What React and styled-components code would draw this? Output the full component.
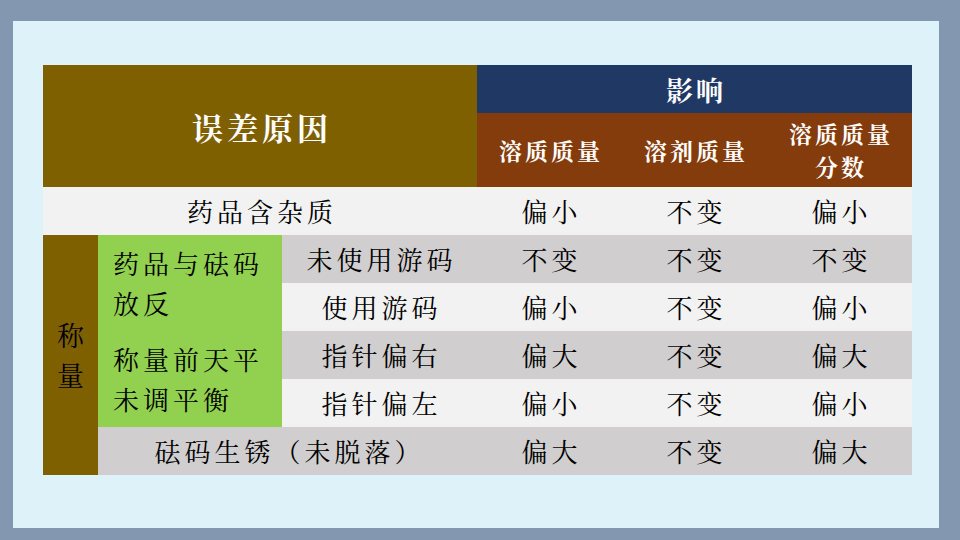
import styled, { createGlobalStyle } from "styled-components";

const GlobalStyle = createGlobalStyle`
  html, body {
    margin: 0;
    padding: 0;
    background: #8497b0;
  }
  body {
    font-family: "KaiTi", "STKaiti", "AR PL UKai CN", "Noto Serif CJK SC", "Noto Sans CJK SC", serif;
  }
`;

const Frame = styled.div`
  width: 960px;
  height: 540px;
  box-sizing: border-box;
  padding: 21px 21px 12px 13px;
`;

const Panel = styled.div`
  width: 926px;
  height: 507px;
  box-sizing: border-box;
  background: #def3f9;
  padding: 44px 0 0 30px;
`;

const Table = styled.table`
  border-collapse: collapse;
  table-layout: fixed;
  width: 869px;
`;

const palette = {
  gold: "#7f6000",
  navy: "#1f3864",
  brown: "#843c0c",
  green: "#92d050",
  gray: "#d0cece",
  light: "#f2f2f2",
};

const Row = styled.tr`
  height: ${(p) => p.$h || 48}px;
  background: ${(p) => palette[p.$bg] || "transparent"};
`;

const Cell = styled.td`
  padding: 0 0 0 ${(p) => (p.$left ? 15 : 4)}px;
  background: ${(p) => (p.$bg ? palette[p.$bg] : "inherit")};
  color: #000;
  font-size: 26px;
  letter-spacing: 4px;
  line-height: 40px;
  text-align: ${(p) => (p.$left ? "left" : "center")};
  vertical-align: middle;
  white-space: nowrap;
`;

const HeadCell = styled.td`
  padding: 0 0 0 ${(p) => p.$ls || 3}px;
  background: ${(p) => palette[p.$bg]};
  color: #fff;
  font-weight: bold;
  font-size: ${(p) => p.$size || 23}px;
  letter-spacing: ${(p) => p.$ls || 3}px;
  line-height: 33px;
  text-align: center;
  vertical-align: middle;
  white-space: nowrap;
`;

const SideCell = styled.td`
  padding: 0;
  background: ${palette.gold};
  color: #000;
  font-size: 27px;
  line-height: 40px;
  text-align: center;
  vertical-align: middle;
`;

const Results = ({ values }) =>
  values.map((v, i) => <Cell key={i}>{v}</Cell>);

export default function App() {
  return (
    <Frame>
      <GlobalStyle />
      <Panel>
        <Table>
          <colgroup>
            <col style={{ width: 55 }} />
            <col style={{ width: 184 }} />
            <col style={{ width: 195 }} />
            <col style={{ width: 145 }} />
            <col style={{ width: 145 }} />
            <col style={{ width: 145 }} />
          </colgroup>
          <tbody>
            <Row $h={48}>
              <HeadCell colSpan={3} rowSpan={2} $bg="gold" $size={31} $ls={4}>
                误差原因
              </HeadCell>
              <HeadCell colSpan={3} $bg="navy" $size={27} $ls={3}>
                影响
              </HeadCell>
            </Row>
            <Row $h={74}>
              <HeadCell $bg="brown">溶质质量</HeadCell>
              <HeadCell $bg="brown">溶剂质量</HeadCell>
              <HeadCell $bg="brown">
                溶质质量
                <br />
                分数
              </HeadCell>
            </Row>
            <Row $bg="light">
              <Cell colSpan={3}>药品含杂质</Cell>
              <Results values={["偏小", "不变", "偏小"]} />
            </Row>
            <Row $bg="gray">
              <SideCell rowSpan={5}>
                称<br />量
              </SideCell>
              <Cell rowSpan={2} $bg="green" $left>
                药品与砝码
                <br />
                放反
              </Cell>
              <Cell>未使用游码</Cell>
              <Results values={["不变", "不变", "不变"]} />
            </Row>
            <Row $bg="light">
              <Cell>使用游码</Cell>
              <Results values={["偏小", "不变", "偏小"]} />
            </Row>
            <Row $bg="gray">
              <Cell rowSpan={2} $bg="green" $left>
                称量前天平
                <br />
                未调平衡
              </Cell>
              <Cell>指针偏右</Cell>
              <Results values={["偏大", "不变", "偏大"]} />
            </Row>
            <Row $bg="light">
              <Cell>指针偏左</Cell>
              <Results values={["偏小", "不变", "偏小"]} />
            </Row>
            <Row $bg="gray">
              <Cell colSpan={2}>砝码生锈（未脱落）</Cell>
              <Results values={["偏大", "不变", "偏大"]} />
            </Row>
          </tbody>
        </Table>
      </Panel>
    </Frame>
  );
}
